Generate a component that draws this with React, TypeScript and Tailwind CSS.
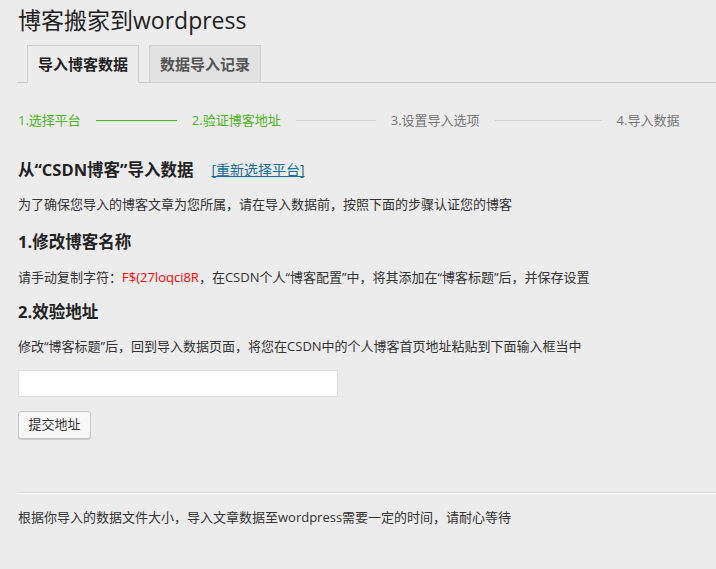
import React from "react";

export default function App() {
  const font = { fontFamily: '"Open Sans", "Noto Sans CJK SC", sans-serif' };
  return (
    <div className="min-h-screen w-full bg-[#ececec] text-[#333]" style={font}>
      <div className="pl-[17px]">
        <h1 className="pt-[6px] pl-[1px] text-[23px] leading-[29px] font-normal text-[#222]">
          博客搬家到wordpress
        </h1>
        <div className="mt-[10px] flex items-end gap-[10px] border-b border-[#c8c8c8] pl-[10px]">
          <div className="-mb-px flex h-[38px] w-[112px] items-center justify-center border border-[#cfcfcf] border-b-[#ececec] bg-[#ececec] text-[15px] font-bold text-[#222]">
            导入博客数据
          </div>
          <div className="-mb-px flex h-[38px] w-[112px] items-center justify-center border border-[#cfcfcf] bg-[#e2e2e2] text-[15px] font-bold text-[#555]">
            数据导入记录
          </div>
        </div>
      </div>

      <div className="pl-[18px]">
        <div className="mt-[27px] flex h-[20px] items-center text-[13px] leading-[20px]">
          <span className="text-[#4cb523]">1.选择平台</span>
          <span className="mx-[15px] h-px w-[81px] bg-[#4cb523]" />
          <span className="text-[#4cb523]">2.验证博客地址</span>
          <span className="mx-[15px] h-px w-[80px] bg-[#d2d2d2]" />
          <span className="text-[#777]">3.设置导入选项</span>
          <span className="mx-[15px] h-px w-[107px] bg-[#d2d2d2]" />
          <span className="text-[#777]">4.导入数据</span>
        </div>

        <div className="mt-[28px] flex h-[24px] items-center">
          <span className="text-[16.5px] leading-[24px] font-bold text-[#222]">从“CSDN博客”导入数据</span>
          <a className="ml-[18px] text-[14px] leading-[24px] text-[#1a6f97] underline [text-decoration-skip-ink:none]" href="#">
            [重新选择平台]
          </a>
        </div>

        <p className="mt-[12px] text-[13px] leading-[20px] text-[#333]">
          为了确保您导入的博客文章为您所属，请在导入数据前，按照下面的步骤认证您的博客
        </p>

        <h3 className="mt-[16px] text-[16.5px] leading-[24px] font-bold text-[#222]">1.修改博客名称</h3>

        <p className="mt-[13px] text-[13px] leading-[20px] text-[#333]">
          请手动复制字符：<span className="text-[#ff0000]">F$(27loqci8R</span>，在CSDN个人“博客配置”中，将其添加在“博客标题”后，并保存设置
        </p>

        <h3 className="mt-[13px] text-[16.5px] leading-[24px] font-bold text-[#222]">2.效验地址</h3>

        <p className="mt-[12px] text-[13px] leading-[20px] text-[#333]">
          修改“博客标题”后，回到导入数据页面，将您在CSDN中的个人博客首页地址粘贴到下面输入框当中
        </p>

        <input
          type="text"
          className="mt-[14px] block h-[27px] w-[320px] border border-[#dcdcdc] bg-white outline-none"
        />

        <button className="mt-[14px] block h-[28px] w-[73px] rounded-[3px] border border-[#c8c8c8] bg-[#f7f7f7] text-[13px] text-[#333] shadow-[0_1px_0_#ccc]">
          提交地址
        </button>
      </div>

      <div className="ml-[17px] mt-[53px] border-t border-b border-t-[#d8d8d8] border-b-white" />

      <p className="mt-[13px] pl-[18px] text-[13px] leading-[20px] text-[#333]">
        根据你导入的数据文件大小，导入文章数据至wordpress需要一定的时间，请耐心等待
      </p>
    </div>
  );
}
